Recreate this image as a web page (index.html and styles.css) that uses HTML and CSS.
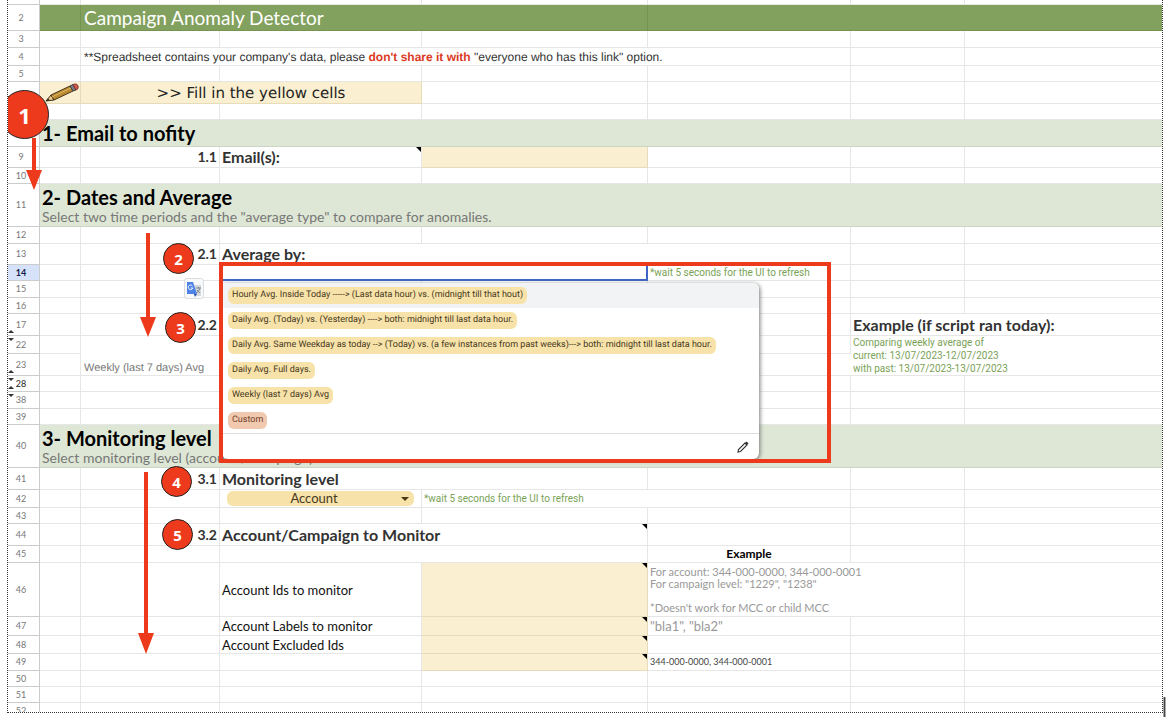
FILE: index.html
```html
<!DOCTYPE html>
<html lang="en">
<head>
<meta charset="utf-8">
<title>Campaign Anomaly Detector</title>
<link rel="stylesheet" href="styles.css">
</head>
<body>
<main class="sheet">
<table class="grid">
<colgroup><col class="c-num"><col class="c-a"><col class="c-b"><col class="c-c"><col class="c-d"><col class="c-e"><col class="c-f"><col></colgroup>
<tbody>
<tr class="h5"><th></th><td></td><td></td><td></td><td></td><td></td><td></td><td></td></tr>
<tr class="h26 banner"><th>2</th><td></td><td colspan="3"><h1 class="title">Campaign Anomaly Detector</h1></td><td colspan="3"></td></tr>
<tr class="h17"><th>3</th><td></td><td></td><td></td><td></td><td></td><td></td><td></td></tr>
<tr class="h18"><th>4</th><td></td><td colspan="4" class="notice">**Spreadsheet contains your company's data, please <strong>don't share it with</strong> "everyone who has this link" option.</td><td></td><td></td></tr>
<tr class="h16"><th>5</th><td></td><td></td><td></td><td></td><td></td><td></td><td></td></tr>
<tr class="h22"><th></th><td class="fill pencil-cell"><svg class="pencil" viewBox="0 0 34 20" aria-hidden="true"><path d="M1 18 6 12 9 17Z" fill="#e8c88c" stroke="#3c2b16"/><path d="M1 18 3 15.500 4.500 17Z" fill="#222"/><path d="M6 12 25 3 28 8 9 17Z" fill="#b98a32" stroke="#49351a"/><path d="M7 14 26 5" stroke="#dfb860"/><path d="M25 3 28 1.500 31 7 28 8Z" fill="#777b88" stroke="#444"/><path d="M28 1.500Q32 0 33 3T31 7Z" fill="#db5947" stroke="#733"/></svg></td><td class="fill fill-hint" colspan="2">&gt;&gt; Fill in the yellow cells</td><td></td><td></td><td></td><td></td></tr>
<tr class="h16"><th></th><td></td><td></td><td></td><td></td><td></td><td></td><td></td></tr>
<tr class="h27 section"><th></th><td colspan="7"><h2>1- Email to nofity</h2></td></tr>
<tr class="h21"><th>9</th><td></td><td class="step">1.1</td><td class="note label"><label for="email">Email(s):</label></td><td class="fill"><input id="email" class="cell-input" type="text"></td><td></td><td></td><td></td></tr>
<tr class="h16"><th>10</th><td></td><td></td><td></td><td></td><td></td><td></td><td></td></tr>
<tr class="h43 section"><th>11</th><td colspan="7"><h2>2- Dates and Average</h2><p>Select two time periods and the "average type" to compare for anomalies.</p></td></tr>
<tr class="h17"><th>12</th><td></td><td></td><td></td><td></td><td></td><td></td><td></td></tr>
<tr class="h21"><th>13</th><td></td><td class="step">2.1</td><td class="label" colspan="3"><label for="average">Average by:</label></td><td></td><td></td></tr>
<tr class="h16"><th class="current">14</th><td></td><td></td><td class="active" colspan="2"><input id="average" class="cell-input" type="text">
<div class="menu">
<ul>
<li><button type="button" class="option hovered"><span class="chip">Hourly Avg. Inside Today -----&gt; (Last data hour) vs. (midnight till that hout)</span></button></li>
<li><button type="button" class="option"><span class="chip">Daily Avg. (Today) vs. (Yesterday) ----&gt; both: midnight till last data hour.</span></button></li>
<li><button type="button" class="option"><span class="chip">Daily Avg. Same Weekday as today --&gt; (Today) vs. (a few instances from past weeks)---&gt; both: midnight till last data hour.</span></button></li>
<li><button type="button" class="option"><span class="chip">Daily Avg. Full days.</span></button></li>
<li><button type="button" class="option"><span class="chip">Weekly (last 7 days) Avg</span></button></li>
<li><button type="button" class="option"><span class="chip custom">Custom</span></button></li>
</ul>
<div class="menu-foot"><button type="button" class="edit" aria-label="Edit"><svg viewBox="0 0 12 12" aria-hidden="true"><path d="M1 11 1.500 8.500 8 2 10 4 3.500 10.500Z" fill="none" stroke="#333" stroke-width="1.100"/><path d="M8 2 9.500.500 11.500 2.500 10 4Z" fill="#333"/></svg></button></div>
</div></td><td class="hint">*wait 5 seconds for the UI to refresh</td><td></td><td></td></tr>
<tr class="h17"><th>15</th><td></td><td></td><td></td><td></td><td></td><td></td><td></td></tr>
<tr class="h16"><th>16</th><td></td><td></td><td></td><td></td><td></td><td></td><td></td></tr>
<tr class="h22"><th class="fold-end">17</th><td></td><td class="step">2.2</td><td></td><td></td><td></td><td class="label" colspan="2">Example (if script ran today):</td></tr>
<tr class="h18"><th class="fold-start">22</th><td></td><td rowspan="2" class="weekly">Weekly (last 7 days) Avg</td><td></td><td></td><td></td><td colspan="2" rowspan="2" class="hint dates">Comparing weekly average of<br>current: 13/07/2023-12/07/2023<br>with past: 13/07/2023-13/07/2023</td></tr>
<tr class="h22"><th class="fold-end">23</th><td></td><td></td><td></td><td></td></tr>
<tr class="h16"><th class="fold-start fold-end dark">28</th><td></td><td></td><td></td><td></td><td></td><td></td><td></td></tr>
<tr class="h17"><th class="fold-start">38</th><td></td><td></td><td></td><td></td><td></td><td></td><td></td></tr>
<tr class="h16"><th>39</th><td></td><td></td><td></td><td></td><td></td><td></td><td></td></tr>
<tr class="h43 section"><th>40</th><td colspan="7"><h2>3- Monitoring level</h2><p>Select monitoring level (account / campaign).</p></td></tr>
<tr class="h22"><th>41</th><td></td><td class="step">3.1</td><td class="label" colspan="2"><label for="level">Monitoring level</label></td><td></td><td></td><td></td></tr>
<tr class="h18"><th>42</th><td></td><td></td><td class="select-cell"><select id="level" class="level"><option>Account</option><option>Campaign</option></select><svg class="caret" viewBox="0 0 8 4" aria-hidden="true"><path d="M0 0H8L4 4Z" fill="#4a3a12"/></svg></td><td class="hint" colspan="2">*wait 5 seconds for the UI to refresh</td><td></td><td></td></tr>
<tr class="h16"><th>43</th><td></td><td></td><td></td><td></td><td></td><td></td><td></td></tr>
<tr class="h22"><th>44</th><td></td><td class="step">3.2</td><td class="label note" colspan="2">Account/Campaign to Monitor</td><td></td><td></td><td></td></tr>
<tr class="h17"><th>45</th><td></td><td></td><td colspan="2"></td><td class="example">Example</td><td></td><td></td></tr>
<tr class="h54"><th>46</th><td></td><td></td><td class="field"><label for="ids">Account Ids to monitor</label></td><td class="fill note"><input id="ids" class="cell-input" type="text"></td><td class="sample" colspan="2">For account: 344-000-0000, 344-000-0001<br>For campaign level: "1229", "1238"<br><br>*Doesn't work for MCC or child MCC</td><td></td></tr>
<tr class="h19"><th>47</th><td></td><td></td><td class="field"><label for="labels">Account Labels to monitor</label></td><td class="fill note"><input id="labels" class="cell-input" type="text"></td><td class="sample large">"bla1", "bla2"</td><td></td><td></td></tr>
<tr class="h18"><th>48</th><td></td><td></td><td class="field"><label for="excluded">Account Excluded Ids</label></td><td class="fill note"><input id="excluded" class="cell-input" type="text"></td><td></td><td></td><td></td></tr>
<tr class="h17"><th>49</th><td></td><td></td><td></td><td class="fill note"></td><td class="sample small">344-000-0000, 344-000-0001</td><td></td><td></td></tr>
<tr class="h16"><th>50</th><td></td><td></td><td></td><td></td><td></td><td></td><td></td></tr>
<tr class="h16"><th>51</th><td></td><td></td><td></td><td></td><td></td><td></td><td></td></tr>
<tr class="h16"><th>52</th><td></td><td></td><td></td><td></td><td></td><td></td><td></td></tr>
</tbody>
</table>
<div class="frame"></div>
<button type="button" class="translate" aria-label="Translate"><svg viewBox="0 0 18 18" aria-hidden="true"><path d="M7 5H16V16H9Z" fill="#d5d8dc"/><path d="M11 8H16M13.500 7V8M15 8Q14 12 11 13M12 10 15 13" stroke="#7d8790" fill="none"/><path d="M2 2H8L12 14H2Z" fill="#4f82e6"/><path d="M9 14H12L10 17Z" fill="#2f56b5"/><path d="M7.500 6A2.300 2.300 0 1 0 7.800 8H5.800" fill="none" stroke="#fff"/></svg></button>
<svg class="arrow arrow-1" viewBox="0 0 16 52" aria-hidden="true"><path d="M6 0H10V32H16L8 52 0 32H6Z"/></svg>
<svg class="arrow arrow-2" viewBox="0 0 16 104" aria-hidden="true"><path d="M6 0H10V84H16L8 104 0 84H6Z"/></svg>
<svg class="arrow arrow-3" viewBox="0 0 16 182" aria-hidden="true"><path d="M6 0H10V161H16L8 182 0 161H6Z"/></svg>
<span class="badge big badge-1">1</span>
<span class="badge badge-2">2</span>
<span class="badge badge-3">3</span>
<span class="badge badge-4">4</span>
<span class="badge badge-5">5</span>
</main>
<div class="cursor"></div>
</body>
</html>
```
FILE: styles.css
```css
* { box-sizing: border-box; }
body { margin: 0; background: #fff; overflow: hidden; font-family: "Liberation Sans", Arial, sans-serif; }
button, input, select { font: inherit; border: 0; background: transparent; padding: 0; margin: 0; }
h1, h2, p, ul { margin: 0; padding: 0; }

.sheet {
  position: relative;
  height: calc(100vh - 14px);
  margin: 0 10px 0 7px;
  overflow: hidden;
  border: 1px dotted #333;
  border-top: 0;
}

.grid { width: 100%; table-layout: fixed; border-collapse: separate; border-spacing: 0; }
.c-num { width: 32px; }
.c-a { width: 41px; }
.c-b { width: 139px; }
.c-c { width: 202px; }
.c-d { width: 226px; }
.c-e { width: 203px; }
.c-f { width: 114px; }

.h5 { height: 5px; }
.h16 { height: 16px; }
.h17 { height: 17px; }
.h18 { height: 18px; }
.h19 { height: 19px; }
.h21 { height: 21px; }
.h22 { height: 22px; }
.h26 { height: 26px; }
.h27 { height: 27px; }
.h43 { height: 43px; }
.h54 { height: 54px; }

td, th {
  position: relative;
  padding: 0 2px;
  border-right: 1px solid #e6e6e6;
  border-bottom: 1px solid #e6e6e6;
  font-size: 11px;
  line-height: 12px;
  text-align: left;
  vertical-align: middle;
  white-space: nowrap;
}
td:last-child { border-right: 0; }
th {
  padding: 0 5px 0 0;
  border-color: #ccc;
  color: #777;
  font-family: Lato, sans-serif;
  font-size: 9px;
  font-weight: 400;
  text-align: center;
}
th.dark { color: #222; }
th.current { background: #d6e1fa; color: #111b45; font-weight: 700; }
.fold-end::after, .fold-start::before {
  content: "";
  position: absolute;
  left: 0;
  border: 3px solid transparent;
}
.fold-end::after { bottom: 2px; border-top: 0; border-bottom-color: #333; }
.fold-start::before { top: 2px; border-bottom: 0; border-top-color: #333; }

.banner td { background: #82a15e; border-color: #74944f; }
.title { color: #fff; font: 400 19px/22px Lato, sans-serif; }
.banner td, .notice, .weekly { padding-left: 3px; }
.notice { font-size: 12px; color: #333; text-rendering: geometricPrecision; }
.notice strong { color: #db3a1e; }

.fill { background: #faf0d1; border-color: #e6dcb9; padding: 0; }
.fill-hint { color: #222; font: 15px/18px "DejaVu Sans", sans-serif; text-align: center; text-rendering: geometricPrecision; }
.pencil-cell { padding-left: 5px; }
.pencil { display: block; width: 34px; height: 20px; }

.section td { background: #dee7d5; border-color: #ccd5c3; }
.section h2 { color: #000; font: 700 20px/24px Lato, sans-serif; }
.section p { color: #777; font: 400 14px/16px Lato, sans-serif; }
.step, .label { color: #333; font: 700 14px/18px Lato, sans-serif; }
.step { text-align: right; }
.label { font-size: 16px; }
.field { color: #111; font: 400 13px/16px Lato, sans-serif; }
.hint { color: #7aa257; font: 400 10px/13px Roboto, sans-serif; }
.weekly { color: #777; vertical-align: bottom; padding-bottom: 1px; text-rendering: geometricPrecision; }
.example { color: #000; font: 700 12px/14px Lato, sans-serif; text-align: center; }
.sample { color: #999; font: 400 11px/12px Lato, sans-serif; }
.sample.large { font-size: 13px; }
.sample.small { color: #444; font-size: 9px; }

.note::after {
  content: "";
  position: absolute;
  top: 0;
  right: 0;
  border-top: 5px solid #000;
  border-left: 5px solid transparent;
}
.cell-input { display: block; width: 100%; height: 14px; outline: none; }

.active { border: 2px solid #3f66c4; border-top-width: 1px; padding: 0; }
.active .cell-input { height: 12px; }
.menu {
  position: absolute;
  z-index: 1;
  top: 17px;
  left: 0;
  width: 537px;
  overflow: hidden;
  background: #fff;
  border-radius: 0 6px 6px 6px;
  box-shadow: 1px 1px 4px #777;
}
.menu ul { list-style: none; }
.option { display: flex; align-items: center; width: 100%; height: 25px; padding: 0 6px; text-align: left; }
.option.hovered { background: #f1f3f4; }
.chip { padding: 0 4px; border-radius: 6px; background: #f7e3a9; color: #473822; font: 400 9px/17px Roboto, sans-serif; text-rendering: geometricPrecision; }
.chip.custom { background: #f0c9af; color: #74402c; }
.menu-foot { display: flex; justify-content: flex-end; padding: 7px 10px 6px; border-top: 1px solid #ddd; }
.edit, .edit svg { display: block; width: 12px; height: 12px; }

.select-cell { padding: 0 7px; }
.level {
  display: block;
  width: 100%;
  height: 15px;
  padding-right: 13px;
  appearance: none;
  border-radius: 6px;
  background: #f7e3a9;
  color: #473822;
  font: 400 13px/15px Lato, sans-serif;
  text-align: center;
  text-align-last: center;
}
.caret { position: absolute; right: 12px; top: 7px; width: 8px; height: 4px; pointer-events: none; }

/* Tutorial annotations drawn over the sheet */
.frame { position: absolute; z-index: 2; left: 211px; top: 262px; width: 612px; height: 201px; border: 4px solid #ee3a1c; pointer-events: none; }
.translate { position: absolute; left: 176px; top: 278px; width: 20px; height: 21px; border: 1px solid #ddd; border-radius: 3px; background: #f8f9fa; }
.translate svg { display: block; width: 18px; height: 18px; }
.arrow { position: absolute; width: 16px; fill: #ee3a1c; }
.arrow-1 { left: 18px; top: 138px; height: 52px; }
.arrow-2 { left: 132px; top: 233px; height: 104px; }
.arrow-3 { left: 130px; top: 472px; height: 182px; }
.badge {
  position: absolute;
  width: 31px;
  height: 31px;
  border: 1px solid #222;
  border-radius: 50%;
  background: #ee3a1c;
  color: #fff;
  font: 700 15px/30px "Open Sans", sans-serif;
  text-align: center;
}
.badge.big { width: 49px; height: 49px; font-size: 22px; line-height: 48px; }
.badge-1 { left: -8px; top: 90px; }
.badge-2 { left: 155px; top: 243px; }
.badge-3 { left: 157px; top: 312px; }
.badge-4 { left: 153px; top: 466px; }
.badge-5 { left: 154px; top: 519px; }
.cursor { position: absolute; right: 7px; bottom: 10px; width: 3px; height: 20px; background: #444; border: 1px solid #aaa; border-width: 0 1px; }
```
